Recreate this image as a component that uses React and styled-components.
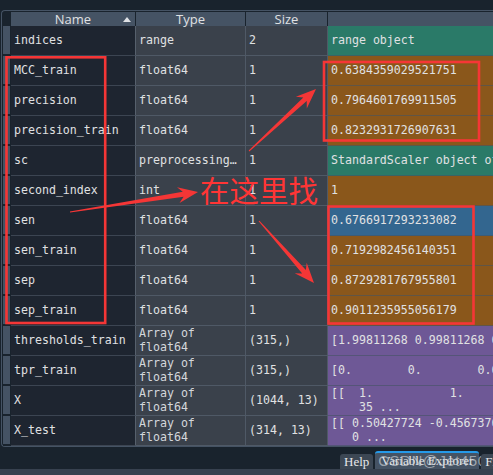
import React from "react";
import styled, { createGlobalStyle } from "styled-components";

const GlobalStyle = createGlobalStyle`
  html, body { margin: 0; padding: 0; background: #19232d; }
  body { width: 493px; height: 475px; overflow: hidden; }
`;

const VALUE_BG = {
  teal: "#2a7a68",
  orange: "#8a571b",
  blue: "#33668f",
  purple: "#6e5896",
};

const COLS = "8px 125px 110px 82px 260px";

const Page = styled.div`
  position: relative;
  width: 493px;
  height: 475px;
  overflow: hidden;
  background: #19232d;
  padding-top: 10px;
  box-sizing: border-box;
  display: flex;
  flex-direction: column;
`;

const Frame = styled.div`
  margin-left: 1px;
  width: 600px;
  border: 1px solid #455364;
  border-right: none;
  border-radius: 4px 0 0 4px;
  padding: 1px 0 0 1px;
  display: flex;
  flex-direction: column;
`;

const HeaderRow = styled.div`
  display: grid;
  grid-template-columns: ${COLS};
  height: 14px;
`;

const Corner = styled.div`
  background: #19232d;
`;

const HeadCell = styled.div`
  position: relative;
  background: #455364;
  border-right: 1px solid #19232d;
  color: #e0e1e3;
  font-family: "Open Sans", "DejaVu Sans", sans-serif;
  font-size: 13px;
  line-height: 14px;
  display: flex;
  justify-content: center;
  align-items: center;
  overflow: visible;
`;

const SortArrow = styled.span`
  position: absolute;
  right: 4px;
  top: 5px;
  width: 0;
  height: 0;
  border-left: 4.5px solid transparent;
  border-right: 4.5px solid transparent;
  border-bottom: 5px solid #dfe2e6;
`;

const Row = styled.div`
  display: grid;
  grid-template-columns: ${COLS};
  height: 30px;
`;

const RowHead = styled.div`
  background: #455364;
  border-right: 1px solid #19232d;
  border-bottom: 2px solid #19232d;
`;

const Cell = styled.div`
  box-sizing: border-box;
  display: flex;
  align-items: center;
  padding-left: 3px;
  overflow: hidden;
  white-space: pre;
  color: #e0e1e3;
  font-family: "DejaVu Sans Mono", "Liberation Mono", monospace;
  font-size: 11.6px;
  line-height: 13.5px;
`;

const NameCell = styled(Cell)`
  background: #1e2530;
  border-right: 1px solid #56606c;
  border-bottom: 1px solid #3c4552;
`;

const InfoCell = styled(Cell)`
  background: #3a414b;
  border-right: 1px solid #4f5966;
  border-bottom: 1px solid #4f5966;
  color: ${(p) => (p.$dim ? "#d4d7dc" : "#e0e1e3")};
`;

const ValueCell = styled(Cell)`
  background: ${(p) => VALUE_BG[p.$kind]};
  border-bottom: 1px solid rgba(69, 83, 100, 0.6);
`;

const TabBar = styled.div`
  display: flex;
  align-items: flex-end;
  gap: 2px;
  height: 20px;
  margin-top: 2px;
  padding-left: 340px;
  position: relative;
`;

const Tab = styled.div`
  position: relative;
  box-sizing: border-box;
  height: ${(p) => (p.$active ? "18px" : "15px")};
  padding: 0 ${(p) => (p.$active ? "6px" : "4px")};
  background: ${(p) => (p.$active ? "#455364" : "#3c4754")};
  border-top: ${(p) => (p.$active ? "2px solid #259ae9" : "none")};
  border-radius: 3px 3px 0 0;
  color: #e6e8eb;
  font-family: "Liberation Serif", "DejaVu Serif", serif;
  font-size: 13px;
  line-height: 15px;
  white-space: nowrap;
  flex-shrink: 0;
`;

const Watermark = styled.span`
  position: absolute;
  left: 3px;
  top: -1px;
  font-family: "Liberation Sans", Arial, sans-serif;
  font-size: 15px;
  line-height: 17px;
  color: rgba(215, 218, 222, 0.62);
  letter-spacing: 0.5px;
`;

const Footer = styled.div`
  margin-top: auto;
  height: 6px;
  background: #37414f;
`;

const Overlay = styled.svg`
  position: absolute;
  left: 0;
  top: 0;
  pointer-events: none;
`;

const Note = styled.div`
  position: absolute;
  left: 200px;
  top: 174px;
  color: #ff3535;
  font-family: "Noto Sans CJK SC", "Noto Sans", sans-serif;
  font-size: 29.5px;
  line-height: 30px;
  white-space: nowrap;
`;

const sp = (n) => " ".repeat(n);

const rows = [
  { name: "indices", type: "range", size: "2", value: "range object", kind: "teal" },
  { name: "MCC_train", type: "float64", size: "1", value: "0.6384359029521751", kind: "orange" },
  { name: "precision", type: "float64", size: "1", value: "0.7964601769911505", kind: "orange" },
  { name: "precision_train", type: "float64", size: "1", value: "0.8232931726907631", kind: "orange" },
  { name: "sc", type: "preprocessing…", size: "1", value: "StandardScaler object of sklearn.preprocessing", kind: "teal" },
  { name: "second_index", type: "int", size: "1", value: "1", kind: "orange" },
  { name: "sen", type: "float64", size: "1", value: "0.6766917293233082", kind: "blue" },
  { name: "sen_train", type: "float64", size: "1", value: "0.7192982456140351", kind: "orange" },
  { name: "sep", type: "float64", size: "1", value: "0.8729281767955801", kind: "orange" },
  { name: "sep_train", type: "float64", size: "1", value: "0.9011235955056179", kind: "orange" },
  { name: "thresholds_train", type: "Array of\nfloat64", size: "(315,)", value: "[1.99811268 0.99811268 0.99622642 0.98867925", kind: "purple", dim: true },
  { name: "tpr_train", type: "Array of\nfloat64", size: "(315,)", value: "[0." + sp(8) + "0." + sp(8) + "0.00316456 0.00316456", kind: "purple", dim: true },
  { name: "X", type: "Array of\nfloat64", size: "(1044, 13)", value: "[[  1." + sp(11) + "1." + sp(11) + "1.\n" + sp(4) + "35 ...", kind: "purple", dim: true },
  { name: "X_test", type: "Array of\nfloat64", size: "(314, 13)", value: "[[ 0.50427724 -0.45673765  0.53184\n" + sp(3) + "0 ...", kind: "purple", dim: true },
];

function arrowPoints(x1, y1, x2, y2, headLen = 20, headW = 16, tailW = 1, neckW = 5) {
  const dx = x2 - x1;
  const dy = y2 - y1;
  const L = Math.hypot(dx, dy);
  const ux = dx / L;
  const uy = dy / L;
  const nx = -uy;
  const ny = ux;
  const bx = x2 - ux * headLen;
  const by = y2 - uy * headLen;
  const kx = x2 - ux * headLen * 0.75;
  const ky = y2 - uy * headLen * 0.75;
  const p = [
    [x1 + nx * tailW / 2, y1 + ny * tailW / 2],
    [kx + nx * neckW / 2, ky + ny * neckW / 2],
    [bx + nx * headW / 2, by + ny * headW / 2],
    [x2, y2],
    [bx - nx * headW / 2, by - ny * headW / 2],
    [kx - nx * neckW / 2, ky - ny * neckW / 2],
    [x1 - nx * tailW / 2, y1 - ny * tailW / 2],
  ];
  return p.map((q) => q[0].toFixed(1) + "," + q[1].toFixed(1)).join(" ");
}

const RED = "#f53636";

export default function App() {
  return (
    <>
      <GlobalStyle />
      <Page>
        <Frame>
          <HeaderRow>
            <Corner />
            <HeadCell>
              Name
              <SortArrow />
            </HeadCell>
            <HeadCell>Type</HeadCell>
            <HeadCell>Size</HeadCell>
            <HeadCell />
          </HeaderRow>
          {rows.map((r) => (
            <Row key={r.name}>
              <RowHead />
              <NameCell>{r.name}</NameCell>
              <InfoCell $dim={r.dim}>{r.type}</InfoCell>
              <InfoCell>{r.size}</InfoCell>
              <ValueCell $kind={r.kind}>{r.value}</ValueCell>
            </Row>
          ))}
        </Frame>
        <TabBar>
          <Tab>Help</Tab>
          <Tab $active>
            Variable Explorer
            <Watermark>CSDN@Jet4505</Watermark>
          </Tab>
          <Tab>Files</Tab>
        </TabBar>
        <Footer />

        <Overlay width="493" height="475" viewBox="0 0 493 475">
          <g fill="none" stroke={RED} strokeWidth="2.6">
            <rect x="6.5" y="57.3" width="98.7" height="265.7" />
            <rect x="324" y="62" width="155" height="78.5" />
            <rect x="328.5" y="206.5" width="145" height="117" />
          </g>
          <g fill={RED}>
            <polygon points={arrowPoints(249, 151, 316, 89)} />
            <polygon points={arrowPoints(70, 212, 198, 192)} />
            <polygon points={arrowPoints(259, 221, 314, 283)} />
          </g>
        </Overlay>
        <Note>在这里找</Note>
      </Page>
    </>
  );
}
